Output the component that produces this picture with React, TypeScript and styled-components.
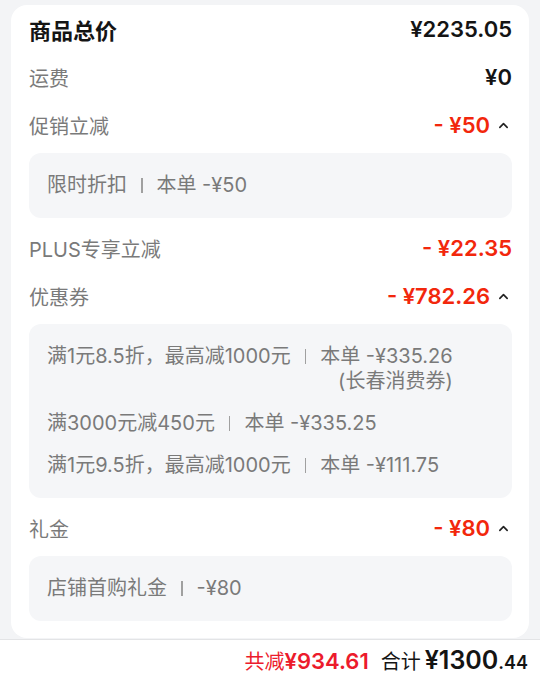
import React from 'react';
import styled, { createGlobalStyle, css } from 'styled-components';

const RED = '#f2270c';
const TOTAL_RED = '#ec1b2c';

const GlobalStyle = createGlobalStyle`
  body {
    margin: 0;
    background: #f3f4f6;
    font-family: Inter, "Noto Sans CJK SC", sans-serif;
    color: #1a1a1a;
  }
`;

/** Page */
const Page = styled.div`
  height: 683px;
  display: flex;
  flex-direction: column;
`;

/** Card */
const Card = styled.div`
  margin: 5px 11px 0;
  padding: 0 17px 11px 18px;
  background: #fff;
  border-radius: 16px;
`;

/** Row */
const Row = styled.div`
  height: 48px;
  display: flex;
  align-items: center;
  justify-content: space-between;
`;

const Label = styled.span<{ strong?: boolean }>`
  font-size: 20px;
  color: #7a7a7a;
  ${props =>
    props.strong &&
    css`
      font-size: 22px;
      font-weight: 700;
      color: #141414;
    `}
`;

const AmountWrap = styled.div`
  display: flex;
  align-items: center;
  gap: 8px;
`;

const Amount = styled.span<{ red?: boolean }>`
  font-size: 22px;
  font-weight: 600;
  color: ${props => (props.red ? RED : '#141414')};
`;

const Chevron = styled.svg`
  width: 11px;
  height: 11px;
  margin-right: 3px;
`;

/** Detail box */
const DetailBox = styled.div`
  margin: 4px 0 6px;
  padding: 20px 18px;
  background: #f5f6f8;
  border-radius: 12px;
  display: flex;
  flex-direction: column;
  gap: 17px;
`;

const DetailItem = styled.div`
  display: flex;
  align-items: flex-start;
  font-size: 20px;
  line-height: 25px;
  color: #7a7a7a;
`;

const Divider = styled.span`
  flex: none;
  width: 1.5px;
  height: 15px;
  margin: 5px 14px 0;
  background: #a0a0a0;
`;

const Detail = styled.div`
  flex: none;
  text-align: right;
`;

/** Bottom bar */
const BottomBar = styled.div`
  flex: 1;
  margin-top: 1px;
  border-top: 1px solid #e3e4e6;
  background: #fff;
  display: flex;
  align-items: center;
  justify-content: flex-end;
  padding: 0 12px 3px 0;
`;

const Saved = styled.span`
  color: ${TOTAL_RED};
  font-size: 20px;
  margin-right: 12px;
  b {
    font-size: 22px;
    font-weight: 600;
  }
`;

const Total = styled.span`
  font-size: 20px;
  color: #141414;
  b {
    font-size: 25px;
    font-weight: 600;
    margin-left: 4px;
  }
  small {
    font-size: 18px;
  }
`;

const ChevronUp = () => (
  <Chevron viewBox="0 0 12 12">
    <path d="M2 8 L6 4 L10 8" fill="none" stroke="#222" strokeWidth="1.8" strokeLinecap="round" strokeLinejoin="round" />
  </Chevron>
);

interface IDetail {
  name: string;
  lines: string[];
}

const Details: React.FC<{ items: IDetail[] }> = ({ items }) => (
  <DetailBox>
    {items.map(item => (
      <DetailItem key={item.name}>
        <span>{item.name}</span>
        <Divider />
        <Detail>
          {item.lines.map(line => (
            <div key={line}>{line}</div>
          ))}
        </Detail>
      </DetailItem>
    ))}
  </DetailBox>
);

const PriceRow: React.FC<{ label: string; amount: string; red?: boolean; open?: boolean }> = ({
  label,
  amount,
  red,
  open
}) => (
  <Row>
    <Label>{label}</Label>
    <AmountWrap>
      <Amount red={red}>{amount}</Amount>
      {open && <ChevronUp />}
    </AmountWrap>
  </Row>
);

export default function App() {
  return (
    <Page>
      <GlobalStyle />
      <Card>
        <Row>
          <Label strong>商品总价</Label>
          <Amount>¥2235.05</Amount>
        </Row>
        <PriceRow label="运费" amount="¥0" />
        <PriceRow label="促销立减" amount="- ¥50" red open />
        <Details items={[{ name: '限时折扣', lines: ['本单 -¥50'] }]} />
        <PriceRow label="PLUS专享立减" amount="- ¥22.35" red />
        <PriceRow label="优惠券" amount="- ¥782.26" red open />
        <Details
          items={[
            { name: '满1元8.5折，最高减1000元', lines: ['本单 -¥335.26', '(长春消费券)'] },
            { name: '满3000元减450元', lines: ['本单 -¥335.25'] },
            { name: '满1元9.5折，最高减1000元', lines: ['本单 -¥111.75'] }
          ]}
        />
        <PriceRow label="礼金" amount="- ¥80" red open />
        <Details items={[{ name: '店铺首购礼金', lines: ['-¥80'] }]} />
      </Card>
      <BottomBar>
        <Saved>
          共减<b>¥934.61</b>
        </Saved>
        <Total>
          合计<b>
            ¥1300<small>.44</small>
          </b>
        </Total>
      </BottomBar>
    </Page>
  );
}
